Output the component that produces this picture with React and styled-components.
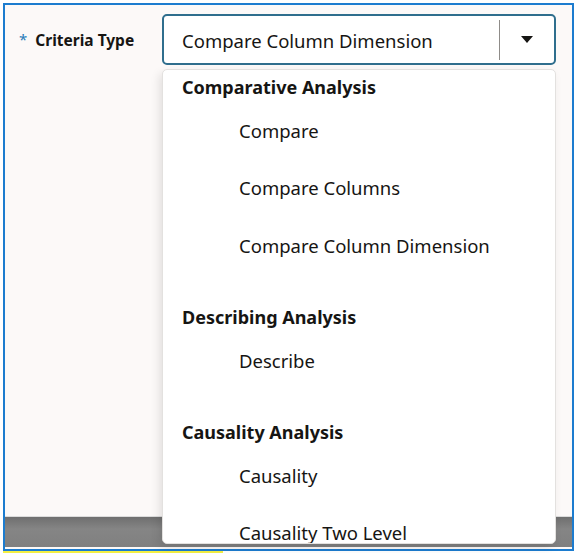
import React from "react";
import styled, { createGlobalStyle } from "styled-components";

const Global = createGlobalStyle`
  html, body { margin: 0; padding: 0; background: #ffffff; }
  body { font-family: "Noto Sans", "Open Sans", sans-serif; color: #161513; }
`;

const Outer = styled.div`
  padding: 3px 0 0 3px;
`;

const Frame = styled.div`
  position: relative;
  width: 571px;
  height: 548px;
  box-sizing: border-box;
  border: 2px solid #1c7ccf;
  background: #fcf9f8;
  display: flex;
  flex-direction: column;
`;

const FormRow = styled.div`
  display: flex;
  padding: 9px 0 0 14px;
  flex: 1;
  align-items: flex-start;
`;

const Label = styled.div`
  width: 143px;
  height: 51px;
  display: flex;
  align-items: center;
  gap: 8px;
  font-weight: 700;
  font-size: 15.5px;
  color: #161513;
`;

const Required = styled.span`
  color: #2a7db8;
  font-size: 15px;
  font-weight: 400;
  margin-top: -2px;
`;

const Select = styled.div`
  width: 394px;
  height: 51px;
  box-sizing: border-box;
  border: 2px solid #2f6e8d;
  border-radius: 5px;
  background: #ffffff;
  display: flex;
  align-items: center;
`;

const Value = styled.div`
  flex: 1;
  padding-left: 18px;
  padding-top: 1px;
  font-size: 18.5px;
  color: #161513;
`;

const Divider = styled.div`
  width: 1px;
  height: 40px;
  background: #8f8c89;
`;

const CaretBox = styled.div`
  width: 54px;
  display: flex;
  justify-content: center;
  align-items: center;
`;

const Footer = styled.div`
  height: 30px;
  margin-bottom: 2px;
  background: linear-gradient(#6f6f6f, #858585 40%, #808080);
  border-top: 1px solid #dcdcdc;
`;

const Panel = styled.div`
  position: absolute;
  left: 157px;
  top: 64px;
  width: 394px;
  height: 475px;
  box-sizing: border-box;
  background: #ffffff;
  border: 1px solid #e3e1df;
  border-radius: 5px;
  box-shadow: -3px 4px 10px rgba(0, 0, 0, 0.10);
  overflow: hidden;
  padding-top: 3px;
`;

const Group = styled.div`
  & + & {
    margin-top: 29px;
  }
`;

const Header = styled.div`
  height: 28.5px;
  display: flex;
  align-items: center;
  padding-left: 19px;
  font-weight: 700;
  font-size: 18px;
  color: #161513;
`;

const Item = styled.div`
  height: 57.5px;
  display: flex;
  align-items: center;
  padding-left: 76px;
  font-size: 18.5px;
  color: #161513;
`;

const Yellow = styled.div`
  width: 220px;
  height: 2px;
  background: #f4f043;
`;

const groups = [
  { title: "Comparative Analysis", items: ["Compare", "Compare Columns", "Compare Column Dimension"] },
  { title: "Describing Analysis", items: ["Describe"] },
  { title: "Causality Analysis", items: ["Causality", "Causality Two Level"] },
];

export default function App() {
  return (
    <>
      <Global />
      <Outer>
        <Frame>
          <FormRow>
            <Label>
              <Required>*</Required>
              <span>Criteria Type</span>
            </Label>
            <Select>
              <Value>Compare Column Dimension</Value>
              <Divider />
              <CaretBox>
                <svg width="12" height="7" viewBox="0 0 12 7">
                  <path d="M0 0 H12 L6 7 Z" fill="#161513" />
                </svg>
              </CaretBox>
            </Select>
          </FormRow>
          <Footer />
          <Panel>
            {groups.map((g) => (
              <Group key={g.title}>
                <Header>{g.title}</Header>
                {g.items.map((it) => (
                  <Item key={it}>{it}</Item>
                ))}
              </Group>
            ))}
          </Panel>
        </Frame>
        <Yellow />
      </Outer>
    </>
  );
}
